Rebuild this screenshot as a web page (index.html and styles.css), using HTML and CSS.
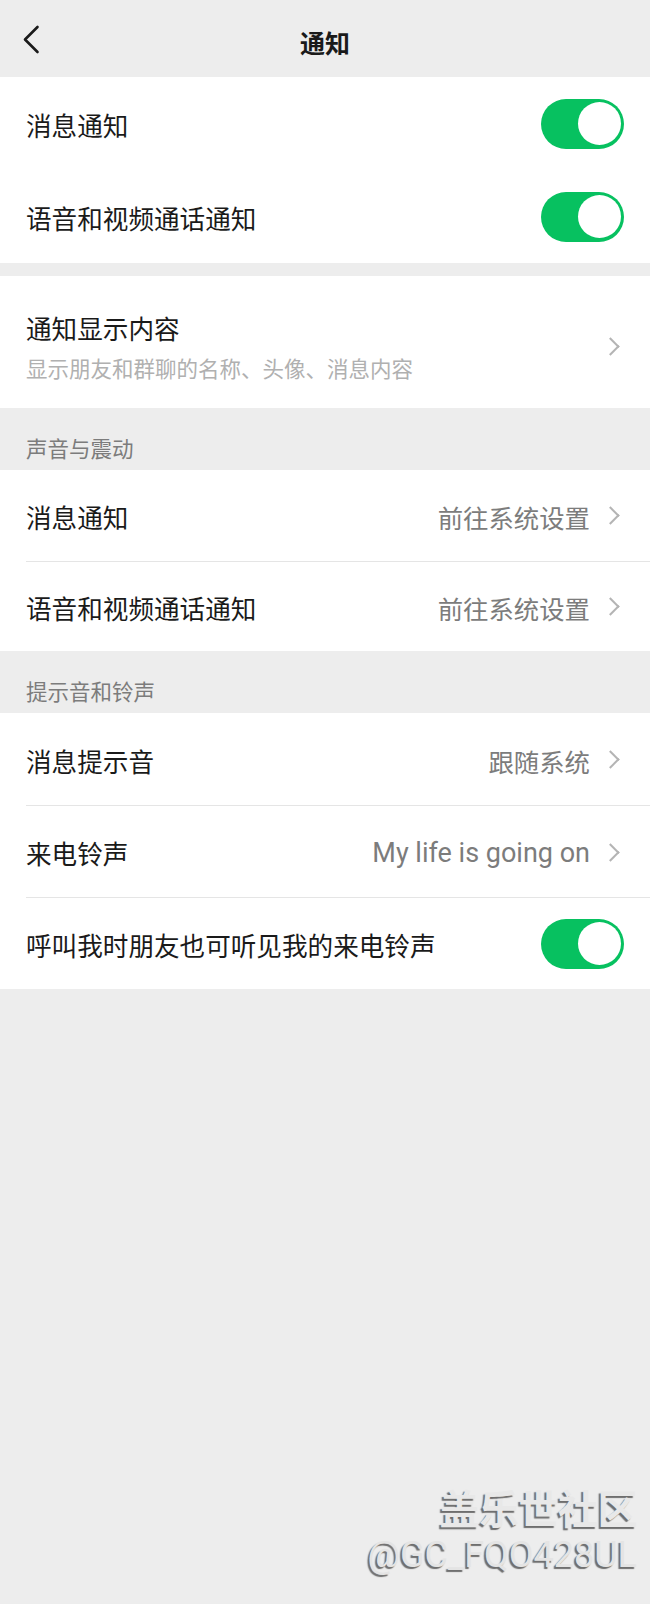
FILE: index.html
```html
<!doctype html>
<html>
<head>
<meta charset=utf-8>
<title>通知</title>
<link rel="stylesheet" href="styles.css">
</head>
<body>

<div class=topbar>
  <svg class=back width=20 height=30 viewBox="0 0 20 30"><path d="M14.5 2 L2 14.5 L14.5 27" fill=none stroke="#1a1a1a" stroke-width=2.6 stroke-linecap=round stroke-linejoin=round /></svg>
  <h1 class=title>通知</h1>
</div>

<div class="group roomy">
  <div class=row><div class=row-inner>
    <span class=label>消息通知</span>
    <span class="switch on"></span>
  </div></div>
  <div class=row><div class="row-inner first">
    <span class=label>语音和视频通话通知</span>
    <span class="switch on"></span>
  </div></div>
</div>

<div class="group spaced">
  <div class=row><div class="row-inner tall">
    <div class=stack>
      <span class=label>通知显示内容</span>
      <span class=desc>显示朋友和群聊的名称、头像、消息内容</span>
    </div>
    <span class=arrow></span>
  </div></div>
</div>

<div class=section-title>声音与震动</div>
<div class="group compact">
  <div class=row><div class=row-inner>
    <span class=label>消息通知</span>
    <span class=value>前往系统设置</span><span class=arrow></span>
  </div></div>
  <div class=row><div class=row-inner>
    <span class=label>语音和视频通话通知</span>
    <span class=value>前往系统设置</span><span class=arrow></span>
  </div></div>
</div>

<div class=section-title>提示音和铃声</div>
<div class=group>
  <div class=row><div class=row-inner>
    <span class=label>消息提示音</span>
    <span class=value>跟随系统</span><span class=arrow></span>
  </div></div>
  <div class=row><div class=row-inner>
    <span class=label>来电铃声</span>
    <span class="value latin">My life is going on</span><span class=arrow></span>
  </div></div>
  <div class=row><div class=row-inner>
    <span class=label>呼叫我时朋友也可听见我的来电铃声</span>
    <span class="switch on"></span>
  </div></div>
</div>

<div class=watermark>
  <div class=wm-brand>盖乐世社区</div>
  <div class=wm-user>@GC_FQO428UL</div>
</div>

</body>
</html>
```

FILE: styles.css
```css
body {
  margin: 0;
  background-color: #ededed;
  font-family: "Noto Sans CJK SC", "Noto Sans", sans-serif;
  color: #1a1a1a;
  height: 1604px;
  position: relative;
  overflow: hidden;
}

.topbar {
  height: 77px;
  display: flex;
  align-items: center;
  justify-content: center;
  position: relative;
}
.back {
  position: absolute;
  left: 23px;
  top: 25px;
}
.title {
  margin: 0;
  font-size: 25px;
  font-weight: bold;
  line-height: 30px;
  padding-top: 6px;
}

.group {
  background: #fff;
}
.group.spaced {
  margin-top: 13px;
}

.row {
  padding-left: 26px;
}
.row + .row .row-inner {
  border-top: 1px solid #e5e5e5;
}
.row-inner {
  box-sizing: border-box;
  height: 92px;
  display: flex;
  align-items: center;
  padding-right: 25px;
}
.roomy .row-inner {
  height: 93px;
}
.compact .row-inner {
  height: 90.5px;
}
.row-inner.first {
  border-top: 0 !important;
}
.row-inner.tall {
  height: auto;
  padding-top: 32px;
  padding-bottom: 25px;
}

.label {
  flex: 1;
  font-size: 25.6px;
  line-height: 34px;
  padding-top: 3px;
}
.stack {
  flex: 1;
  display: flex;
  flex-direction: column;
}
.desc {
  font-size: 21.5px;
  line-height: 30px;
  color: #b0b0b0;
  margin-top: 8px;
}

.value {
  font-size: 25.4px;
  line-height: 34px;
  padding-top: 3px;
  color: #7c7c7c;
}
.value.latin {
  font-family: Roboto, "Noto Sans", sans-serif;
  font-size: 27px;
}

.arrow {
  width: 11px;
  height: 18px;
  margin-left: 18px;
  margin-right: 6px;
  position: relative;
}
.arrow::before {
  content: "";
  position: absolute;
  left: -4px;
  top: 3px;
  width: 11px;
  height: 11px;
  border-top: 2px solid #b4b4b4;
  border-right: 2px solid #b4b4b4;
  transform: rotate(45deg);
}

.switch {
  width: 83px;
  height: 50px;
  border-radius: 25px;
  background: #d8d8d8;
  position: relative;
  margin-right: 1px;
}
.switch.on {
  background: #07c160;
}
.switch::after {
  content: "";
  position: absolute;
  top: 3.5px;
  left: 3.5px;
  width: 43px;
  height: 43px;
  border-radius: 50%;
  background: #fff;
}
.switch.on::after {
  left: auto;
  right: 3.5px;
}

.section-title {
  font-size: 21.5px;
  line-height: 30px;
  color: #7c7c7c;
  padding: 25px 26px 7px;
}

.watermark {
  position: absolute;
  right: 13px;
  top: 1484px;
  text-align: right;
}
.wm-brand {
  font-size: 40px;
  font-weight: bold;
  line-height: 46px;
  color: #e8e8e8;
  text-shadow: -2px 2px 1px #6e6e6e;
  letter-spacing: -0.5px;
}
.wm-user {
  font-family: Roboto, "Noto Sans", sans-serif;
  font-size: 36px;
  line-height: 46px;
  color: #e4e4e4;
  text-shadow: -2px 2px 1px #6e6e6e;
  margin-top: 2px;
}
```
